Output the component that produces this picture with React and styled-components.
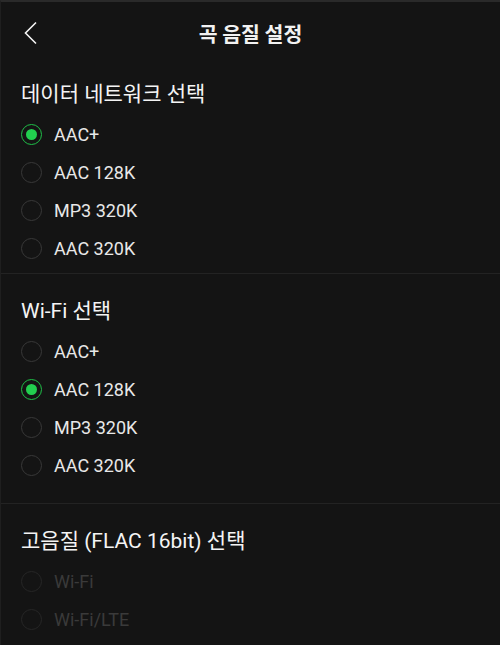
import React, { useState } from 'react';
import styled, { createGlobalStyle } from 'styled-components';

const GlobalStyle = createGlobalStyle`
  html, body {
    margin: 0;
    padding: 0;
    background: #141414;
  }
  body {
    font-family: Roboto, "Noto Sans CJK KR", sans-serif;
  }
`;

const Page = styled.div`
  width: 500px;
  min-height: 645px;
  box-sizing: border-box;
  background: #141414;
  border-top: 2px solid #2a2a2a;
  border-left: 1px solid #1f1f1f;
  color: #f2f2f2;
`;

const Header = styled.header`
  height: 55px;
  box-sizing: border-box;
  padding-top: 7px;
  display: grid;
  grid-template-columns: 60px 1fr 60px;
  align-items: center;
`;

const BackButton = styled.button`
  background: none;
  border: none;
  padding: 0 0 0 22px;
  display: flex;
  align-items: center;
  color: #f5f5f5;
  cursor: pointer;
`;

const Title = styled.h1`
  margin: 0;
  text-align: center;
  font-family: "Noto Sans CJK KR", sans-serif;
  font-size: 20.5px;
  font-weight: 700;
`;

const Section = styled.section`
  padding: 22px 0 ${p => p.$bottom}px 20px;
  border-top: ${p => (p.$divider ? '1px solid #232323' : 'none')};
`;

const Heading = styled.h2`
  margin: 0 0 6px;
  height: 30px;
  line-height: 30px;
  font-family: Roboto, "Noto Sans CJK KR", sans-serif;
  font-size: 21px;
  font-weight: 400;
  color: #f4f4f4;
`;

const List = styled.div`
  display: flex;
  flex-direction: column;
`;

const Option = styled.label`
  height: 38px;
  display: flex;
  align-items: center;
  gap: 12px;
  font-size: 18px;
  color: ${p => (p.$disabled ? '#3a3a3a' : '#e8e8e8')};
  cursor: ${p => (p.$disabled ? 'default' : 'pointer')};
`;

const Radio = styled.span`
  width: 21px;
  height: 21px;
  box-sizing: border-box;
  border-radius: 50%;
  border: 1.5px solid ${p => (p.$checked ? '#1fbf48' : p.$disabled ? '#262626' : '#383838')};
  display: flex;
  align-items: center;
  justify-content: center;
  flex-shrink: 0;

  &::after {
    content: '';
    width: 11px;
    height: 11px;
    border-radius: 50%;
    background: ${p => (p.$checked ? '#22cf4f' : 'transparent')};
  }
`;

const qualities = ['AAC+', 'AAC 128K', 'MP3 320K', 'AAC 320K'];

const RadioGroup = ({ options, value, onChange, disabled }) => (
  <List>
    {options.map(opt => (
      <Option key={opt} $disabled={disabled} onClick={() => !disabled && onChange(opt)}>
        <Radio $checked={!disabled && value === opt} $disabled={disabled} />
        {opt}
      </Option>
    ))}
  </List>
);

const App = () => {
  const [mobile, setMobile] = useState('AAC+');
  const [wifi, setWifi] = useState('AAC 128K');

  return (
    <>
      <GlobalStyle />
      <Page>
        <Header>
          <BackButton aria-label="뒤로">
            <svg width="16" height="24" viewBox="0 0 16 24" fill="none">
              <path d="M13 1.5 L2.5 12 L13 22.5" stroke="currentColor" strokeWidth="1.6" />
            </svg>
          </BackButton>
          <Title>곡 음질 설정</Title>
          <span />
        </Header>

        <Section $bottom={6}>
          <Heading>데이터 네트워크 선택</Heading>
          <RadioGroup options={qualities} value={mobile} onChange={setMobile} />
        </Section>

        <Section $divider $bottom={19}>
          <Heading>Wi-Fi 선택</Heading>
          <RadioGroup options={qualities} value={wifi} onChange={setWifi} />
        </Section>

        <Section $divider $bottom={10}>
          <Heading>고음질 (FLAC 16bit) 선택</Heading>
          <RadioGroup options={['Wi-Fi', 'Wi-Fi/LTE']} disabled />
        </Section>
      </Page>
    </>
  );
};

export default App;
